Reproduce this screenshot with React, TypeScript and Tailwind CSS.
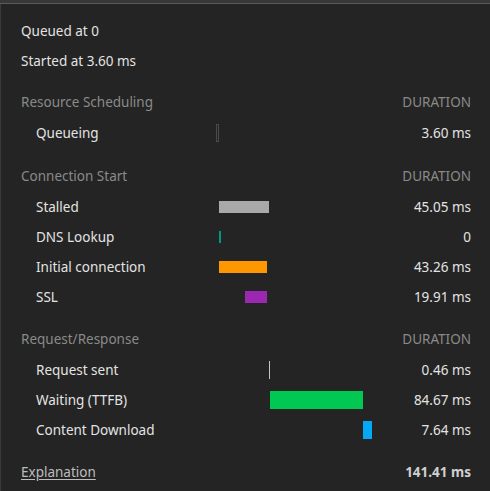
import React from "react";

type Bar = { left: number; width: number; height: number; color: string; outline?: boolean };
type Row = { label: string; value: string; bar: Bar };
type Section = { title: string; rows: Row[]; mt: string };

const sections: Section[] = [
  {
    title: "Resource Scheduling",
    mt: "mt-[11px]",
    rows: [
      { label: "Queueing", value: "3.60 ms", bar: { left: 0, width: 3, height: 18, color: "#4a4a4a", outline: true } },
    ],
  },
  {
    title: "Connection Start",
    mt: "mt-[13px]",
    rows: [
      { label: "Stalled", value: "45.05 ms", bar: { left: 3, width: 50, height: 12, color: "#a9a9a9" } },
      { label: "DNS Lookup", value: "0", bar: { left: 3, width: 2, height: 12, color: "#009688" } },
      { label: "Initial connection", value: "43.26 ms", bar: { left: 3, width: 48, height: 12, color: "#ff9800" } },
      { label: "SSL", value: "19.91 ms", bar: { left: 29, width: 22, height: 12, color: "#9c27b0" } },
    ],
  },
  {
    title: "Request/Response",
    mt: "mt-[12px]",
    rows: [
      { label: "Request sent", value: "0.46 ms", bar: { left: 53, width: 1, height: 18, color: "#c4c4c4" } },
      { label: "Waiting (TTFB)", value: "84.67 ms", bar: { left: 54, width: 93, height: 18, color: "#00c853" } },
      { label: "Content Download", value: "7.64 ms", bar: { left: 147, width: 9, height: 18, color: "#03a9f4" } },
    ],
  },
];

function TimingBar({ bar }: { bar: Bar }) {
  const style: React.CSSProperties = {
    left: bar.left,
    width: bar.width,
    height: bar.height,
    top: `calc(50% - ${bar.height / 2}px)`,
  };
  if (bar.outline) {
    return <div className="absolute border border-[#4a4a4a]" style={style} />;
  }
  return <div className="absolute" style={{ ...style, backgroundColor: bar.color }} />;
}

export default function App() {
  return (
    <div
      className="min-h-screen w-full bg-[#242424] text-[13.5px] text-[#e3e3e3]"
      style={{ fontFamily: '"Noto Sans", "Open Sans", sans-serif' }}
    >
      <div className="h-[4px] bg-[#383838] border-b border-[#5a5a5a]" />
      <div className="border-l border-[#3a3a3a] min-h-[487px] pl-[20px] pr-[19px] pt-[12px]">
        <div className="h-[30px] flex items-center">Queued at 0</div>
        <div className="h-[30px] flex items-center">Started at 3.60 ms</div>

        {sections.map((s) => (
          <div key={s.title} className={s.mt}>
            <div className="h-[31px] flex items-center justify-between text-[#8a8a8a]">
              <span>{s.title}</span>
              <span>DURATION</span>
            </div>
            {s.rows.map((r) => (
              <div key={r.label} className="h-[30px] flex items-center">
                <div className="w-[195px] pl-[15px] shrink-0">{r.label}</div>
                <div className="relative h-full w-[170px] shrink-0">
                  <TimingBar bar={r.bar} />
                </div>
                <div className="flex-1 text-right">{r.value}</div>
              </div>
            ))}
          </div>
        ))}

        <div className="mt-[12px] h-[30px] flex items-center justify-between">
          <a className="underline text-[#bdbdbd] underline-offset-2 cursor-pointer">Explanation</a>
          <span className="font-bold text-[#d0d0d0]">141.41 ms</span>
        </div>
      </div>
    </div>
  );
}
